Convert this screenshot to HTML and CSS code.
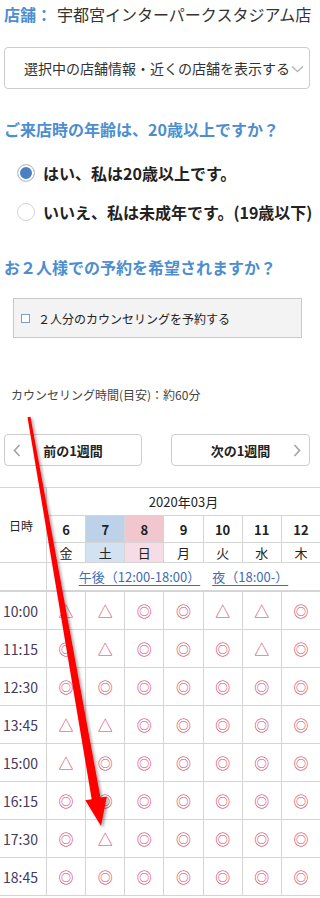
FILE: index.html
```html
<!DOCTYPE html>
<html lang="ja">
<head>
<meta charset="utf-8">
<title>予約</title>
<link rel="stylesheet" href="styles.css">
</head>
<body>
<div class="page">
  <p class="store"><span class="store-label">店舗：</span>宇都宮インターパークスタジアム店</p>

  <div class="select">
    <span class="select-text">選択中の店舗情報・近くの店舗を表示する</span>
    <svg class="select-chev" width="13" height="8" viewBox="0 0 13 8"><path d="M1 1.5 L6.5 6.5 L12 1.5" fill="none" stroke="#b8b8b8" stroke-width="1.6"/></svg>
  </div>

  <h2 class="question">ご来店時の年齢は、20歳以上ですか？</h2>
  <div class="radios">
    <label class="radio"><span class="radio-dot is-checked"></span>はい、私は20歳以上です。</label>
    <label class="radio"><span class="radio-dot"></span>いいえ、私は未成年です。(19歳以下)</label>
  </div>

  <h2 class="question question-pair">お２人様での予約を希望されますか？</h2>
  <label class="pair"><span class="pair-box"></span>２人分のカウンセリングを予約する</label>

  <p class="duration">カウンセリング時間(目安)：約60分</p>

  <div class="weeknav">
    <button class="week-btn" type="button">
      <svg width="8" height="13" viewBox="0 0 8 13"><path d="M6.5 1 L1.5 6.5 L6.5 12" fill="none" stroke="#a8a8a8" stroke-width="1.8"/></svg>
      <span>前の1週間</span>
      <span></span>
    </button>
    <button class="week-btn" type="button">
      <span></span>
      <span>次の1週間</span>
      <svg width="8" height="13" viewBox="0 0 8 13"><path d="M1.5 1 L6.5 6.5 L1.5 12" fill="none" stroke="#a8a8a8" stroke-width="1.8"/></svg>
    </button>
  </div>

  <div class="schedule">
    <div class="cell head-time">日時</div>
    <div class="cell head-month">2020年03月</div>

    <div class="cell date">6</div>
    <div class="cell date sat">7</div>
    <div class="cell date sun">8</div>
    <div class="cell date">9</div>
    <div class="cell date">10</div>
    <div class="cell date">11</div>
    <div class="cell date">12</div>

    <div class="cell wday">金</div>
    <div class="cell wday sat">土</div>
    <div class="cell wday sun">日</div>
    <div class="cell wday">月</div>
    <div class="cell wday">火</div>
    <div class="cell wday">水</div>
    <div class="cell wday">木</div>

    <div class="cell period-blank"></div>
    <div class="cell period"><a href="#">午後（12:00-18:00）</a><a href="#">夜（18:00-）</a></div>

    <div class="cell time">10:00</div>
    <div class="cell slot">△</div><div class="cell slot">△</div><div class="cell slot">◎</div><div class="cell slot">◎</div><div class="cell slot">△</div><div class="cell slot">△</div><div class="cell slot">◎</div>

    <div class="cell time">11:15</div>
    <div class="cell slot">◎</div><div class="cell slot">△</div><div class="cell slot">◎</div><div class="cell slot">◎</div><div class="cell slot">◎</div><div class="cell slot">△</div><div class="cell slot">◎</div>

    <div class="cell time">12:30</div>
    <div class="cell slot">◎</div><div class="cell slot">◎</div><div class="cell slot">◎</div><div class="cell slot">◎</div><div class="cell slot">◎</div><div class="cell slot">◎</div><div class="cell slot">◎</div>

    <div class="cell time">13:45</div>
    <div class="cell slot">△</div><div class="cell slot">△</div><div class="cell slot">◎</div><div class="cell slot">◎</div><div class="cell slot">◎</div><div class="cell slot">◎</div><div class="cell slot">◎</div>

    <div class="cell time">15:00</div>
    <div class="cell slot">△</div><div class="cell slot">◎</div><div class="cell slot">◎</div><div class="cell slot">◎</div><div class="cell slot">◎</div><div class="cell slot">◎</div><div class="cell slot">◎</div>

    <div class="cell time">16:15</div>
    <div class="cell slot">◎</div><div class="cell slot">◎</div><div class="cell slot">◎</div><div class="cell slot">◎</div><div class="cell slot">◎</div><div class="cell slot">◎</div><div class="cell slot">◎</div>

    <div class="cell time">17:30</div>
    <div class="cell slot">◎</div><div class="cell slot">△</div><div class="cell slot">◎</div><div class="cell slot">◎</div><div class="cell slot">◎</div><div class="cell slot">◎</div><div class="cell slot">◎</div>

    <div class="cell time">18:45</div>
    <div class="cell slot">◎</div><div class="cell slot">◎</div><div class="cell slot">◎</div><div class="cell slot">◎</div><div class="cell slot">◎</div><div class="cell slot">◎</div><div class="cell slot">◎</div>
  </div>

  <svg class="annotation" width="320" height="898" viewBox="0 0 320 898">
    <defs>
      <filter id="arrow-shadow" x="-50%" y="-10%" width="200%" height="120%">
        <feDropShadow dx="2" dy="2" stdDeviation="1.8" flood-color="#000" flood-opacity="0.35"/>
      </filter>
    </defs>
    <polygon filter="url(#arrow-shadow)" fill="#ff0000"
      points="30.5,416.7 100.5,797.6 106.9,796.5 101,826 85.3,800.3 91.7,799.2 27.5,417.3"/>
  </svg>
</div>
</body>
</html>
```

FILE: styles.css
```css
html, body {
  margin: 0;
  padding: 0;
  background: #fff;
}

.page {
  position: relative;
  width: 320px;
  height: 898px;
  overflow: hidden;
  font-family: "Noto Sans CJK JP", "Noto Sans", sans-serif;
  color: #333;
}

.store {
  margin: 0;
  padding: 4px 4px 0;
  font-size: 16px;
  line-height: 20px;
  white-space: nowrap;
  color: #333;
}

.store-label {
  color: #4c8ed0;
  font-weight: bold;
  margin-right: 5px;
}

.select {
  margin: 23px 10px 0 4px;
  height: 42px;
  box-sizing: border-box;
  border: 1px solid #cdcdcd;
  border-radius: 4px;
  display: flex;
  align-items: center;
  padding-left: 19px;
  gap: 1px;
  font-size: 14px;
  color: #333;
  white-space: nowrap;
}

.select-chev {
  flex: none;
  margin-top: 2px;
}

.question {
  margin: 30px 0 0;
  padding-left: 4px;
  font-size: 16px;
  line-height: 20px;
  font-weight: bold;
  color: #4c8ed0;
  white-space: nowrap;
}

.question-pair {
  margin-top: 35px;
}

.radios {
  margin-top: 24px;
  padding-left: 17px;
  display: flex;
  flex-direction: column;
  gap: 19px;
}

.radio {
  display: flex;
  align-items: center;
  gap: 8px;
  height: 20px;
  font-size: 16px;
  font-weight: bold;
  color: #222;
  white-space: nowrap;
}

.radio-dot {
  flex: none;
  width: 18px;
  height: 18px;
  box-sizing: border-box;
  border: 1px solid #d3d3d3;
  border-radius: 50%;
  background: #fff;
}

.radio-dot.is-checked {
  background: #4a80c2;
  box-shadow: inset 0 0 0 2px #fff;
  border-color: #c8c8c8;
}

.pair {
  margin: 21px 18px 0 13px;
  height: 40px;
  box-sizing: border-box;
  border: 1px solid #c9c9c9;
  background: #f3f3f3;
  display: flex;
  align-items: center;
  padding-left: 7px;
  gap: 8px;
  font-size: 12px;
  color: #222;
  white-space: nowrap;
}

.pair-box {
  flex: none;
  width: 9px;
  height: 9px;
  box-sizing: border-box;
  border: 1px solid #7d9ec9;
  background: #fff;
}

.duration {
  margin: 49px 0 0;
  padding-left: 11px;
  font-size: 12px;
  line-height: 16px;
  color: #444;
}

.weeknav {
  margin-top: 31px;
  padding-left: 4px;
  display: grid;
  grid-template-columns: 138px 139px;
  column-gap: 29px;
}

.week-btn {
  height: 32px;
  box-sizing: border-box;
  border: 1px solid #cdcdcd;
  border-radius: 4px;
  background: #fff;
  padding: 0;
  display: grid;
  grid-template-columns: 24px 1fr 24px;
  align-items: center;
  justify-items: center;
  font-family: "Noto Sans CJK JP", sans-serif;
  font-size: 13px;
  font-weight: bold;
  color: #222;
}

.week-btn svg {
  display: block;
}

.schedule {
  margin-top: 21px;
  display: grid;
  grid-template-columns: 46px repeat(7, 1fr);
  grid-template-rows: 27px 26px 19px 28px repeat(8, 37px);
  gap: 1px;
  background: #d5d5d5;
  border-top: 1px solid #d5d5d5;
  border-bottom: 1px solid #d5d5d5;
}

.cell {
  background: #fff;
  display: flex;
  align-items: center;
  justify-content: center;
  font-size: 13px;
  color: #222;
  white-space: nowrap;
}

.head-time {
  grid-row: span 3;
  font-size: 12px;
  padding-right: 4px;
}

.head-month {
  grid-column: 2 / -1;
}

.date {
  font-weight: bold;
}

.date.sat {
  background: #bdd1e9;
}

.date.sun {
  background: #f1c6ce;
}

.wday.sat {
  background: #d3e2f2;
}

.wday.sun {
  background: #f6dde5;
}

.period-blank,
.period {
  box-sizing: border-box;
  border-bottom: 1px solid #d5d5d5;
}

.period {
  grid-column: 2 / -1;
  gap: 12px;
}

.period a {
  color: #3c6eb4;
  text-decoration: underline;
  text-underline-offset: 3px;
}

.time {
  justify-content: flex-start;
  padding-left: 3px;
  font-size: 14px;
  color: #45395c;
}

.slot {
  font-size: 15px;
  color: #d33c5f;
}

.annotation {
  position: absolute;
  top: 0;
  left: 0;
  pointer-events: none;
}
```
